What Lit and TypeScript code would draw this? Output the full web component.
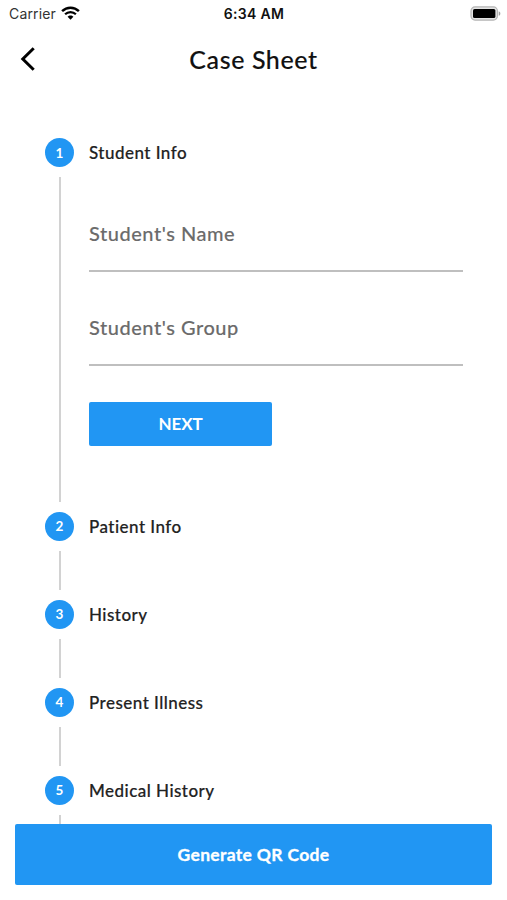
import { LitElement, html, css } from "lit";
import { customElement, property } from "lit/decorators.js";

@customElement("status-bar")
class StatusBar extends LitElement {
  static styles = css`
    :host {
      display: grid;
      grid-template-columns: 1fr auto 1fr;
      align-items: center;
      height: 28px;
      padding: 0 6px 2px 9px;
      box-sizing: border-box;
      font-family: Inter, "Liberation Sans", sans-serif;
      color: #111;
    }
    .carrier { display: flex; align-items: center; gap: 5px; font-size: 14px; letter-spacing: 0.15px; color: #333; }
    .time { font-size: 14px; font-weight: 600; letter-spacing: 0.3px; margin-right: 2px; }
    .battery { justify-self: end; }
    svg { display: block; }
    .wifi { margin-top: -1px; }
  `;
  render() {
    return html`
      <div class="carrier">
        <span>Carrier</span>
        <svg class="wifi" width="19" height="14" viewBox="0 0 19 14">
          <path d="M1.1 5.1C5.9.5 13.1.5 17.9 5.1" fill="none" stroke="#000" stroke-width="2.5" />
          <path d="M4.1 8.3C7.1 5.3 11.9 5.3 14.9 8.3" fill="none" stroke="#000" stroke-width="2.2" />
          <path d="M6.6 10.8C8.1 9.1 10.9 9.1 12.4 10.8L9.5 13.8Z" fill="#000" />
        </svg>
      </div>
      <div class="time">6:34 AM</div>
      <svg class="battery" width="31" height="15" viewBox="0 0 31 15">
        <rect x="1" y="0.9" width="26.4" height="13.2" rx="4" fill="#e4e4e4" stroke="#b4b4b4" stroke-width="1.2" />
        <rect x="3" y="3" width="22.4" height="9" rx="1.6" fill="#000" />
        <path d="M28.7 5.2C30.9 6.1 30.9 8.9 28.7 9.8Z" fill="#a0a0a0" />
      </svg>
    `;
  }
}

@customElement("step-item")
class StepItem extends LitElement {
  @property({ type: Number }) number = 1;
  @property() label = "";
  static styles = css`
    :host {
      display: grid;
      grid-template-columns: 29px 1fr;
      grid-template-rows: 29px 1fr;
      column-gap: 15px;
      min-height: 88px;
      box-sizing: border-box;
      flex: none;
    }
    .badge {
      display: flex;
      align-items: center;
      justify-content: center;
      border-radius: 50%;
      background: #2196f3;
      color: #fff;
      font-size: 13.5px;
      font-weight: 700;
    }
    .label {
      align-self: center;
      font-size: 17px;
      font-weight: 500;
      letter-spacing: 0.47px;
      font-variant-ligatures: none;
      -webkit-text-stroke: 0.18px currentColor;
      color: #222;
      white-space: nowrap;
    }
    .line { width: 2px; margin: 10px 0 10px 14px; background: #d2d2d2; }
  `;
  render() {
    return html`
      <div class="badge">${this.number}</div>
      <div class="label">${this.label}</div>
      <div class="line"></div>
      <div><slot></slot></div>
    `;
  }
}

@customElement("app-root")
class AppRoot extends LitElement {
  static styles = css`
    :host {
      display: flex;
      flex-direction: column;
      height: 900px;
      overflow: hidden;
      background: #fff;
      font-family: Lato, "Liberation Sans", sans-serif;
    }
    .bar { display: grid; grid-template-columns: 40px 1fr 40px; align-items: center; height: 62px; padding: 0 15px; flex: none; }
    .title { margin: 0; text-align: center; font-size: 25px; font-weight: 500; letter-spacing: 0.6px; -webkit-text-stroke: 0.12px currentColor; color: #111; }
    .back { display: block; margin-left: 4px; }
    .steps { flex: 1; min-height: 0; overflow: hidden; display: flex; flex-direction: column; padding: 48px 44px 0 45px; }
    .form { display: flex; flex-direction: column; height: 344.5px; }
    .field {
      display: flex;
      align-items: center;
      height: 74px;
      margin-bottom: 18px;
      border-bottom: 2px solid #bfbfbf;
      font-size: 20px;
      font-weight: 500;
      letter-spacing: 0.53px;
      -webkit-text-stroke: 0.12px currentColor;
      color: #6b6b6b;
    }
    .first { margin-top: 29px; }
    button { border: 0; border-radius: 2px; background: #2196f3; color: #fff; font-family: Lato, "Liberation Sans", sans-serif; font-weight: 700; }
    .next { width: 183px; height: 44px; margin-top: 18px; padding: 0 0 2px; font-size: 17px; letter-spacing: -0.1px; }
    .generate { flex: none; height: 61px; margin: 0 15px 15px; padding: 0; font-size: 17.5px; letter-spacing: 0.32px; -webkit-text-stroke: 0.3px currentColor; }
  `;
  render() {
    return html`
      <status-bar></status-bar>
      <header class="bar">
        <svg class="back" width="18" height="26" viewBox="0 0 18 26">
          <path d="M14.7 2.2L3.8 13L14.7 23.8" fill="none" stroke="#000" stroke-width="3" />
        </svg>
        <h1 class="title">Case Sheet</h1>
      </header>
      <main class="steps">
        <step-item .number=${1} label="Student Info">
          <div class="form">
            <div class="field first">Student's Name</div>
            <div class="field">Student's Group</div>
            <button class="next">NEXT</button>
          </div>
        </step-item>
        ${["Patient Info", "History", "Present Illness", "Medical History"].map(
          (label, i) => html`<step-item .number=${i + 2} label=${label}></step-item>`
        )}
      </main>
      <button class="generate">Generate QR Code</button>
    `;
  }
}
